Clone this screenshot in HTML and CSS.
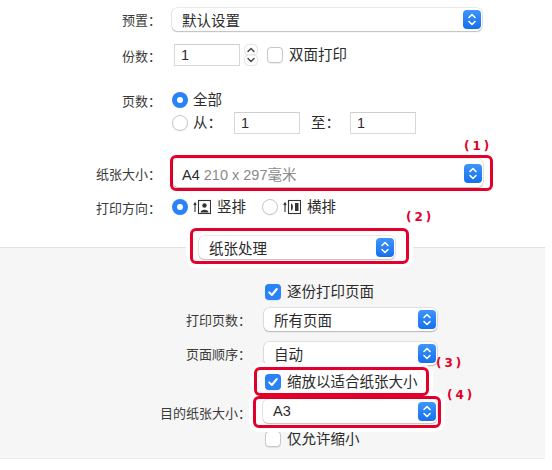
FILE: index.html
```html
<!DOCTYPE html>
<html lang="zh-CN">
<head>
    <meta charset="UTF-8">
    <meta name="viewport" content="width=device-width, initial-scale=1.0">
    <title>打印设置</title>
    <link rel="stylesheet" href="styles.css">
</head>
<body>
    <div class="dialog">
        <section class="general">
            <div class="row preset">
                <span class="label">预置：</span>
                <div class="select w-main">
                    <span>默认设置</span>
                    <span class="stepper"><svg viewBox="0 0 18 19" width="18" height="19"><path d="M6 7.5 9 4.5 12 7.5M6 11.5 9 14.5 12 11.5"/></svg></span>
                </div>
            </div>

            <div class="row copies">
                <span class="label">份数：</span>
                <span class="field">1</span>
                <svg class="spin" viewBox="0 0 14 22" width="14" height="22">
                    <rect x="0.5" y="0.5" width="13" height="10.5" rx="4"/>
                    <rect x="0.5" y="11" width="13" height="10.5" rx="4"/>
                    <path d="M4 7.5 7 4.5 10 7.5M4 14.5 7 17.5 10 14.5"/>
                </svg>
                <span class="check"></span>
                <span class="text">双面打印</span>
            </div>

            <div class="row pages">
                <span class="label">页数：</span>
                <span class="radio on"></span>
                <span class="text">全部</span>
            </div>

            <div class="row range">
                <span class="label"></span>
                <span class="radio"></span>
                <span class="text from">从：</span>
                <span class="field">1</span>
                <span class="text to">至：</span>
                <span class="field">1</span>
            </div>

            <div class="row paper">
                <span class="label">纸张大小：</span>
                <div class="mark m1">
                    <span class="tag">(1)</span>
                    <div class="select w-main tall">
                        <span>A4 <span class="dim">210 x 297毫米</span></span>
                        <span class="stepper"><svg viewBox="0 0 18 19" width="18" height="19"><path d="M6 7.5 9 4.5 12 7.5M6 11.5 9 14.5 12 11.5"/></svg></span>
                    </div>
                </div>
            </div>

            <div class="row orient">
                <span class="label">打印方向：</span>
                <span class="radio on"></span>
                <svg class="page-icon" viewBox="0 0 18 16" width="18" height="16">
                    <path class="arrow" d="M2 13V4M0.8 6 2 3.8 3.2 6"/>
                    <rect x="5.5" y="1.5" width="12" height="13"/>
                    <circle cx="11.5" cy="6.5" r="2.2"/>
                    <path class="fill" d="M7.5 13.5c0-3.6 8-3.6 8 0z"/>
                </svg>
                <span class="text">竖排</span>
                <span class="radio second"></span>
                <svg class="page-icon" viewBox="0 0 18 16" width="18" height="16">
                    <path class="arrow" d="M2 13V4M0.8 6 2 3.8 3.2 6"/>
                    <rect x="5.5" y="1.5" width="12" height="13"/>
                    <path class="fill" d="M8 4.5c2.5 0 2.5 7 0 7z"/>
                    <rect class="fill" x="12" y="4" width="3.5" height="8"/>
                </svg>
                <span class="text">横排</span>
            </div>
        </section>

        <section class="handling">
            <div class="row menu">
                <div class="mark m2">
                    <span class="tag">(2)</span>
                    <div class="select w-menu">
                        <span>纸张处理</span>
                        <span class="stepper"><svg viewBox="0 0 18 19" width="18" height="19"><path d="M6 7.5 9 4.5 12 7.5M6 11.5 9 14.5 12 11.5"/></svg></span>
                    </div>
                </div>
            </div>

            <div class="row indent collate">
                <span class="check on"><svg viewBox="0 0 16 16" width="16" height="16"><path d="M4.2 8.4 6.9 11 11.8 5"/></svg></span>
                <span class="text">逐份打印页面</span>
            </div>

            <div class="row choice">
                <span class="label">打印页数：</span>
                <div class="select w-side">
                    <span>所有页面</span>
                    <span class="stepper"><svg viewBox="0 0 18 19" width="18" height="19"><path d="M6 7.5 9 4.5 12 7.5M6 11.5 9 14.5 12 11.5"/></svg></span>
                </div>
            </div>

            <div class="row choice order">
                <span class="label">页面顺序：</span>
                <div class="select w-side">
                    <span>自动</span>
                    <span class="stepper"><svg viewBox="0 0 18 19" width="18" height="19"><path d="M6 7.5 9 4.5 12 7.5M6 11.5 9 14.5 12 11.5"/></svg></span>
                </div>
            </div>

            <div class="row scale">
                <div class="mark m3">
                    <span class="tag">(3)</span>
                    <span class="check on"><svg viewBox="0 0 16 16" width="16" height="16"><path d="M4.2 8.4 6.9 11 11.8 5"/></svg></span>
                    <span class="text">缩放以适合纸张大小</span>
                </div>
            </div>

            <div class="row target">
                <span class="label">目的纸张大小：</span>
                <div class="mark m4">
                    <span class="tag">(4)</span>
                    <div class="select w-target">
                        <span>A3</span>
                        <span class="stepper"><svg viewBox="0 0 18 19" width="18" height="19"><path d="M6 7.5 9 4.5 12 7.5M6 11.5 9 14.5 12 11.5"/></svg></span>
                    </div>
                </div>
            </div>

            <div class="row indent shrink">
                <span class="check"></span>
                <span class="text">仅允许缩小</span>
            </div>
        </section>
    </div>
</body>
</html>
```

FILE: styles.css
```css
body {
    margin: 0;
    background: #fff;
    font-family: "Liberation Sans", "Noto Sans CJK SC", sans-serif;
    color: #2b2b2b;
}
.dialog { width: 552px; }
.row { display: flex; align-items: center; }
.label {
    flex: none;
    text-align: right;
    font-size: 13px;
    color: #3a3a3a;
}
.text { font-size: 14.5px; line-height: 18px; color: #2b2b2b; white-space: nowrap; }

/* general */
.general { padding-top: 8px; }
.general .label { width: 161px; margin-right: 11px; }
.preset { height: 23px; }
.copies { height: 22px; margin-top: 13px; }
.pages { height: 16px; margin-top: 26px; }
.range { height: 22px; margin-top: 4px; }
.paper { margin-top: 21px; }
.orient { height: 16px; margin-top: 8px; }

.pages .text { margin-left: 5px; }
.range .from { margin-left: 5px; }
.range .field { margin-left: 12px; }
.range .to { margin-left: 11px; }
.range .to + .field { margin-left: 10px; }

.copies .field { margin-left: 2px; }
.copies .spin { margin-left: 4px; }
.copies .check { margin-left: 9px; }
.copies .text { margin-left: 6px; }

.orient .page-icon { margin-left: 5px; }
.orient .text { margin-left: 6px; }
.orient .second { margin-left: 16px; }

/* controls */
.select {
    position: relative;
    flex: none;
    display: flex;
    align-items: center;
    justify-content: space-between;
    box-sizing: border-box;
    height: 23px;
    padding: 0 1px 0 10px;
    background: #fff;
    border-radius: 5px;
    box-shadow: 0 0 0 0.5px rgba(0, 0, 0, 0.16), 0 1px 1.5px rgba(0, 0, 0, 0.2);
    font-size: 14.5px;
    color: #2b2b2b;
}
.select .dim { color: #8a8a8a; }
.w-main { width: 310px; }
.tall { height: 28px; padding-left: 9px; }
.w-menu { width: 196px; }
.w-side { width: 173px; }
.w-target { width: 174px; height: 24px; }

.stepper {
    display: flex;
    flex: none;
    width: 18px;
    height: 19px;
    border-radius: 4px;
    background: linear-gradient(#3d95fb, #1670ee);
}
.stepper path {
    fill: none;
    stroke: #fff;
    stroke-width: 1.6;
    stroke-linecap: round;
    stroke-linejoin: round;
}

.field {
    flex: none;
    display: flex;
    align-items: center;
    box-sizing: border-box;
    width: 66px;
    height: 22px;
    padding-left: 6px;
    background: #fff;
    border: 1px solid #d8d8d8;
    border-top-color: #cecece;
    font-size: 14.5px;
}
.spin { flex: none; }
.spin rect { fill: #fff; stroke: #dcdcdc; stroke-width: 0.8; }
.spin path {
    fill: none;
    stroke: #444;
    stroke-width: 1.4;
    stroke-linecap: round;
    stroke-linejoin: round;
}

.check, .radio {
    flex: none;
    box-sizing: border-box;
    width: 16px;
    height: 16px;
    background: #fff;
    border: 1px solid #c8c8c8;
    box-shadow: 0 0.5px 1px rgba(0, 0, 0, 0.08);
}
.check { border-radius: 4px; }
.radio { border-radius: 50%; }
.check.on {
    display: flex;
    background: #2a83f6;
    border: none;
}
.check.on path {
    fill: none;
    stroke: #fff;
    stroke-width: 2;
    stroke-linecap: round;
    stroke-linejoin: round;
}
.radio.on {
    display: flex;
    align-items: center;
    justify-content: center;
    background: #2a83f6;
    border: none;
}
.radio.on::after {
    content: "";
    width: 6px;
    height: 6px;
    border-radius: 50%;
    background: #fff;
}

.page-icon { flex: none; }
.page-icon rect, .page-icon .arrow { fill: none; stroke: #333; stroke-width: 1.1; }
.page-icon circle, .page-icon .fill { fill: #333; stroke: none; }

/* red callouts */
.mark {
    position: relative;
    flex: none;
    display: flex;
    align-items: center;
    background: #fff;
    border: 3px solid #e3002b;
    border-radius: 6px;
    box-shadow: 0 0 0 4px #fff;
}
.tag {
    position: absolute;
    font: bold 12px/12px "DejaVu Sans", sans-serif;
    letter-spacing: 3px;
    color: #e3002b;
    white-space: nowrap;
}
.m1 { margin-left: -2px; padding: 1px 7px 1px 0; }
.m1 .tag { left: 291px; top: -18px; }
.m2 { padding: 5px 11px 2px 6px; }
.m2 .tag { left: 213px; top: -20px; }
.m3 {
    z-index: 2;
    box-sizing: border-box;
    height: 29px;
    padding: 0 8px;
    box-shadow: -4px 0 #fff, 4px 0 #fff, 0 -4px #fff;
}
.m3 .text { margin-left: 6px; }
.m3 .tag { left: 179px; top: -13px; }
.m4 { z-index: 1; margin-left: -11px; padding: 0 1px 2px 7px; }
.m4 .tag { left: 191px; top: -10px; }

/* paper handling */
.handling {
    position: relative;
    z-index: 0;
    width: 545px;
    margin-top: 13px;
    padding-bottom: 11px;
    border-bottom: 1px solid #ebebeb;
    background: linear-gradient(#fff 0 19px, #e2e2e2 19px 20px, #f6f6f6 20px);
}
.handling .label { width: 251px; margin-right: 13px; }
.menu { padding-left: 190px; }
.indent { padding-left: 265px; height: 16px; }
.indent .text { margin-left: 6px; }
.collate { margin-top: 20px; }
.choice { margin-top: 8px; }
.order { margin-top: 11px; }
.scale { margin-top: 2px; padding-left: 254px; }
.shrink { margin-top: 3px; }
```
